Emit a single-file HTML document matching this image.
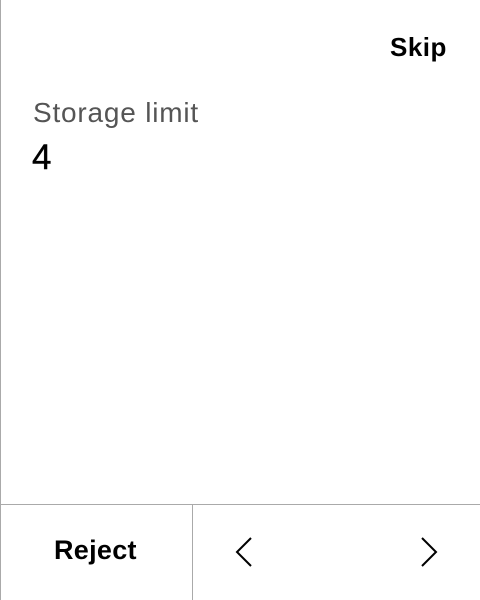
<!DOCTYPE html>
<html><head><style>
html,body{margin:0;padding:0;width:480px;height:600px;background:#fff;overflow:hidden;font-family:"Liberation Sans",sans-serif;}
.l{position:absolute;left:0;top:0;width:1px;height:600px;background:#aaa;}
.h{position:absolute;left:0;top:504px;width:480px;height:1px;background:#aaa;}
.v{position:absolute;left:192px;top:504px;width:1px;height:96px;background:#aaa;}
.t{position:absolute;white-space:nowrap;}
</style></head><body>
<div class="l"></div><div class="h"></div><div class="v"></div>
<div class="t" style="left:390px;top:32px;font-size:26px;font-weight:bold;color:#000;letter-spacing:0.5px;">Skip</div>
<div class="t" style="left:33px;top:97px;font-size:28px;color:#555;letter-spacing:0.8px;">Storage limit</div>
<div class="t" style="left:32px;top:138px;font-size:35px;color:#000;-webkit-text-stroke:0.4px #000;">4</div>
<div class="t" style="left:54px;top:535px;font-size:27px;font-weight:bold;color:#000;letter-spacing:0.3px;">Reject</div>
<svg style="position:absolute;left:0;top:0" width="480" height="600">
<path d="M251 538 L237 552 L251 566" fill="none" stroke="#000" stroke-width="2"/>
<path d="M422 538 L436 552 L422 566" fill="none" stroke="#000" stroke-width="2"/>
</svg>
</body></html>
